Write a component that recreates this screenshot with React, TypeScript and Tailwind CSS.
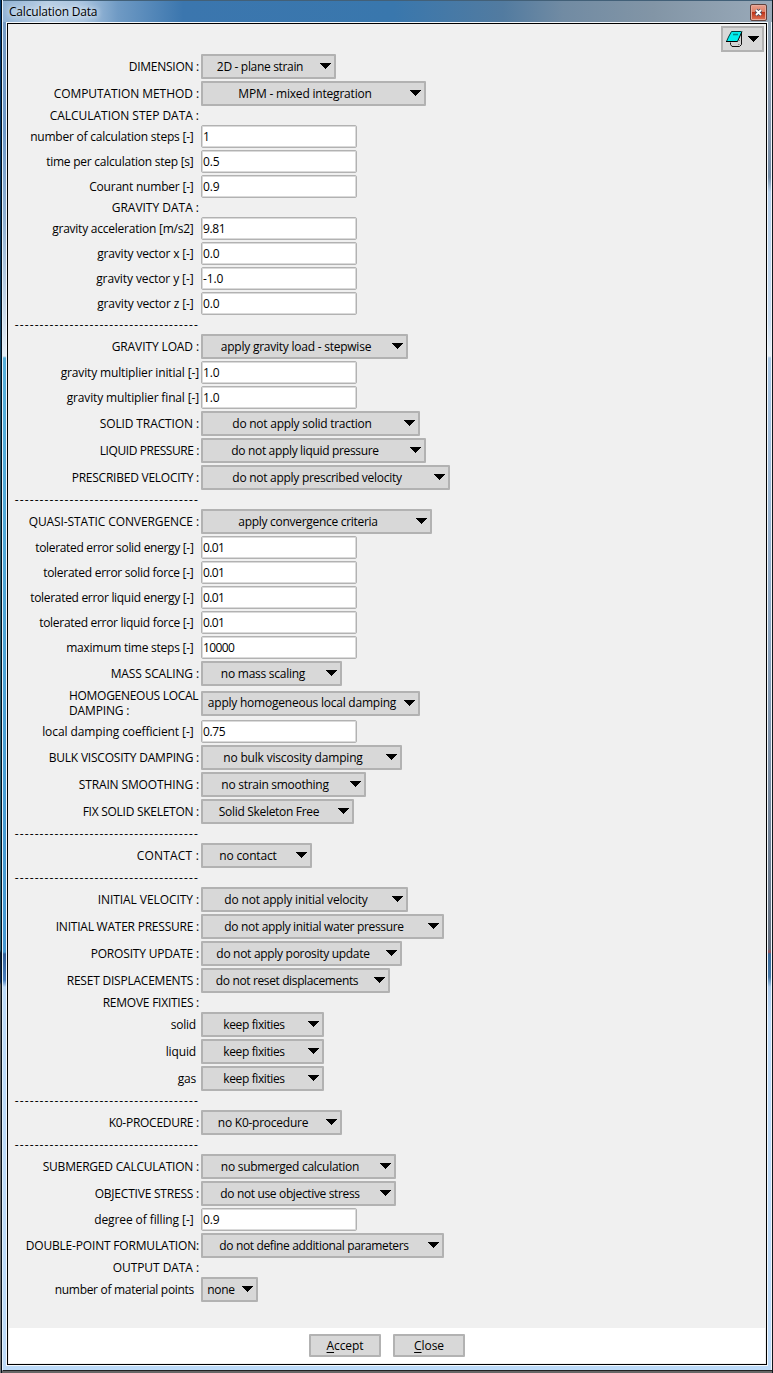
import { useLayoutEffect, useRef } from "react";

type Kind = "select" | "input" | "heading" | "rule" | "tall";

interface Row {
  kind: Kind;
  label: string;
  labelWidth: number;
  inset?: string;
  value?: string;
  valueWidth?: number;
  width?: string;
}

const s = (label: string, labelWidth: number, value: string, valueWidth: number, width: string, inset = ""): Row => ({
  kind: "select", label, labelWidth, value, valueWidth, width, inset,
});
const i = (label: string, labelWidth: number, value: string, valueWidth: number, inset = "pr-[5.5px]"): Row => ({
  kind: "input", label, labelWidth, value, valueWidth, inset,
});
const h = (label: string, labelWidth: number): Row => ({ kind: "heading", label, labelWidth });
const rule: Row = { kind: "rule", label: "-------------------------------------", labelWidth: 184 };

const rows: Row[] = [
  s("DIMENSION :", 70, "2D - plane strain", 86, "w-[135px]"),
  s("COMPUTATION METHOD :", 145, "MPM - mixed integration", 133, "w-[225px]"),
  h("CALCULATION STEP DATA :", 149),
  i("number of calculation steps [-]", 163, "1", 6),
  i("time per calculation step [s]", 147, "0.5", 16),
  i("Courant number [-]", 104, "0.9", 16),
  h("GRAVITY DATA :", 87),
  i("gravity acceleration [m/s2]", 141, "9.81", 22),
  i("gravity vector x [-]", 96, "0.0", 16),
  i("gravity vector y [-]", 97, "-1.0", 20),
  i("gravity vector z [-]", 96, "0.0", 16),
  rule,
  s("GRAVITY LOAD :", 87, "apply gravity load - stepwise", 150, "w-[207px]"),
  i("gravity multiplier initial [-]", 138, "1.0", 16, ""),
  i("gravity multiplier final [-]", 132, "1.0", 16, ""),
  s("SOLID TRACTION :", 99, "do not apply solid traction", 139, "w-[219px]"),
  s("LIQUID PRESSURE :", 99, "do not apply liquid pressure", 147, "w-[225px]"),
  s("PRESCRIBED VELOCITY :", 127, "do not apply prescribed velocity", 169, "w-[249px]"),
  rule,
  s("QUASI-STATIC CONVERGENCE :", 170, "apply convergence criteria", 139, "w-[231px]"),
  i("tolerated error solid energy [-]", 158, "0.01", 21),
  i("tolerated error solid force [-]", 150, "0.01", 21),
  i("tolerated error liquid energy [-]", 163, "0.01", 21),
  i("tolerated error liquid force [-]", 154, "0.01", 21),
  i("maximum time steps [-]", 127, "10000", 31),
  s("MASS SCALING :", 88, "no mass scaling", 84, "w-[141px]"),
  { kind: "tall", label: "HOMOGENEOUS LOCAL", labelWidth: 129, value: "apply homogeneous local damping", valueWidth: 188, width: "w-[219px]" },
  i("local damping coefficient [-]", 151, "0.75", 22),
  s("BULK VISCOSITY DAMPING :", 150, "no bulk viscosity damping", 139, "w-[201px]"),
  s("STRAIN SMOOTHING :", 120, "no strain smoothing", 107, "w-[165px]"),
  s("FIX SOLID SKELETON :", 116, "Solid Skeleton Free", 100, "w-[153px]"),
  rule,
  s("CONTACT :", 62, "no contact", 57, "w-[111px]"),
  rule,
  s("INITIAL VELOCITY :", 101, "do not apply initial velocity", 143, "w-[207px]"),
  s("INITIAL WATER PRESSURE :", 143, "do not apply initial water pressure", 179, "w-[243px]"),
  s("POROSITY UPDATE :", 108, "do not apply porosity update", 153, "w-[201px]"),
  s("RESET DISPLACEMENTS :", 132, "do not reset displacements", 142, "w-[189px]"),
  h("REMOVE FIXITIES :", 96),
  s("solid", 25, "keep fixities", 61, "w-[123px]", "pr-[3px]"),
  s("liquid", 30, "keep fixities", 61, "w-[123px]", "pr-[3px]"),
  s("gas", 18, "keep fixities", 61, "w-[123px]", "pr-[3px]"),
  rule,
  s("K0-PROCEDURE :", 90, "no K0-procedure", 90, "w-[141px]"),
  rule,
  s("SUBMERGED CALCULATION :", 156, "no submerged calculation", 138, "w-[195px]"),
  s("OBJECTIVE STRESS :", 104, "do not use objective stress", 139, "w-[195px]"),
  i("degree of filling [-]", 99, "0.9", 16),
  s("DOUBLE-POINT FORMULATION:", 173, "do not define additional parameters", 189, "w-[243px]"),
  h("OUTPUT DATA :", 86),
  s("number of material points", 139, "none", 27, "w-[57px]", "pr-[5px]"),
];

const rowHeight: Record<Kind, string> = {
  select: "h-[27px]",
  input: "h-[25px]",
  heading: "h-[17px]",
  rule: "h-[17px]",
  tall: "h-8",
};

/* Text whose tracking is adjusted so that its advance equals the given width. */
function Fitted({ text, width }: { text: string; width: number }) {
  const ref = useRef<HTMLSpanElement>(null);
  useLayoutEffect(() => {
    const el = ref.current;
    if (!el) return;
    el.style.letterSpacing = "0px";
    const natural = el.getBoundingClientRect().width;
    const step = (width + 0.3 - natural) / text.length;
    el.style.letterSpacing = `${step}px`;
  }, [text, width]);
  return <span ref={ref} className="inline-block whitespace-pre">{text}</span>;
}

function Arrow() {
  return (
    <svg width="11" height="6" viewBox="0 0 11 6" className="mb-px shrink-0" shapeRendering="crispEdges">
      <path d="M0 0H11V1H10V2H9V3H8V4H7V5H6V6H5V5H4V4H3V3H2V2H1V1H0Z" fill="#000" />
    </svg>
  );
}

function Select({ row }: { row: Row }) {
  return (
    <button className={`flex h-[25px] items-center rounded-[1px] border-2 border-[#b2b2b2] bg-[#d8d8d8] pr-[3px] ${row.width}`}>
      <span className="flex min-w-0 flex-1 justify-center overflow-visible pr-[3px] whitespace-nowrap">
        <Fitted text={row.value ?? ""} width={row.valueWidth ?? 0} />
      </span>
      <Arrow />
    </button>
  );
}

function Field({ row }: { row: Row }) {
  return (
    <div className="flex h-[23px] w-[156px] items-center rounded-[2px] border border-[#b2b2b2] bg-white pl-px shadow-[inset_0_0_0_1px_#dadada]">
      <Fitted text={row.value ?? ""} width={row.valueWidth ?? 0} />
    </div>
  );
}

function FormRow({ row }: { row: Row }) {
  return (
    <div className={`flex items-center ${rowHeight[row.kind]}`}>
      <div className={`flex w-[191px] shrink-0 justify-end whitespace-nowrap ${row.inset ?? ""}`}>
        {row.kind === "tall" ? (
          <div className="flex w-[130px] flex-col items-start leading-[15px]">
            <Fitted text={row.label} width={row.labelWidth} />
            <Fitted text="DAMPING :" width={60} />
          </div>
        ) : (
          <Fitted text={row.label} width={row.labelWidth} />
        )}
      </div>
      <div className="ml-[2px]">
        {row.kind === "input" && <Field row={row} />}
        {(row.kind === "select" || row.kind === "tall") && <Select row={row} />}
      </div>
    </div>
  );
}

function NotebookIcon() {
  return (
    <svg width="18" height="18" viewBox="0 0 18 18">
      <path d="M5 11.5V14.5L6.5 16.5H14L16.5 14.5V4.5L15 4Z" fill="#d3d3d3" />
      <path d="M5.5 12.5V14.5L7 16.5H14.5L16.5 14.5V3" fill="none" stroke="#111" strokeWidth="1" />
      <path d="M6.5 1.5H17L12.5 11.5H1.5L3.5 7Z" fill="#00eeee" />
      <path d="M1.5 11.5L3.5 7L6.5 1.5H16.5" fill="none" stroke="#043c3c" strokeWidth="1" />
      <path d="M17 1.5L12.5 11.5H1" fill="none" stroke="#000" strokeWidth="1" />
      <path d="M8 4.5H13" stroke="#008b8b" strokeWidth="1.6" />
      <path d="M13.5 10.5H15M13 14.5H14.5" stroke="#888" strokeWidth="1" />
    </svg>
  );
}

export default function App() {
  return (
    <div className="flex h-[1373px] w-[773px] overflow-hidden bg-[#666] font-['Open_Sans','Noto_Sans',sans-serif] text-[12px] leading-[16px] text-black">
      <div className="w-[2px] shrink-0 border-r border-[#05101c] bg-[linear-gradient(180deg,#003a75_0px,#073b64_270px,#255c70_500px,#25677d_950px,#061e35_953px,#0b3060_982px,#606060_985px,#777_1373px)]" />
      <div className="flex h-[1371px] w-[770px] shrink-0 flex-col border-b border-l border-b-[#222] border-l-[#e6f1fa] bg-[linear-gradient(180deg,#779dc5_0px,#6c98c8_130px,#8fb1d3_220px,#e4edf5_356px,#55aeda_358px,#4497d0_952px,#315f98_954px,#477dbd_980px,#bcdaf8_987px,#bcdaf8_1371px)]">
        <header className="flex h-[22px] shrink-0 items-center justify-between border-t border-[#426078] bg-[linear-gradient(90deg,#91b3d5_0px,#b9cfe5_45px,#a9c4df_80px,#6f9ac4_115px,#3b76ae_180px,#3977ad_390px,#527ba0_500px,#718ba3_560px,#8295a6_650px,#9aaab9_769px)] pr-[5px] pl-[6px]">
          <span className="[text-shadow:0_0_7px_#fff,0_0_5px_#ddeaff]">
            <Fitted text="Calculation Data" width={88} />
          </span>
          <button className="mt-px flex h-[17px] w-[17px] items-center justify-center rounded-[2px] border border-[#61423d] bg-[linear-gradient(180deg,#eaa08e_0%,#df8067_45%,#bd341a_50%,#df7457_100%)] shadow-[inset_0_0_0_1px_#e7aa9b]">
            <svg width="9" height="9" viewBox="0 0 9 9">
              <path d="M2 2L7 7M7 2L2 7" stroke="#424b61" strokeWidth="3.4" />
              <path d="M2 2L7 7M7 2L2 7" stroke="#fff" strokeWidth="1.8" />
            </svg>
          </button>
        </header>
        <div className="flex min-h-0 flex-1">
          <div className="w-[3px] shrink-0" />
          <main className="flex h-[1344px] w-[762px] flex-col border border-[#f4f8fc] bg-black p-px">
            <div className="flex h-[1304px] shrink-0 flex-col bg-[#f0f0f0]">
              <div className="flex h-[29px] shrink-0 justify-end pt-[2px] pr-[2px]">
                <button className="flex h-[26px] w-[43px] items-center gap-[5px] border-2 border-[#b2b2b2] bg-[#d8d8d8] pl-[2px]">
                  <NotebookIcon />
                  <Arrow />
                </button>
              </div>
              <div className="flex flex-col">
                {rows.map((row, n) => (
                  <FormRow key={n} row={row} />
                ))}
              </div>
            </div>
            <footer className="flex min-h-0 flex-1 items-center justify-center gap-3 border-x border-b border-[#f0f0f0] bg-white">
              <button className="h-[23px] w-[72px] rounded-[1px] border-2 border-[#b2b2b2] bg-[#d8d8d8] leading-[18px] tracking-[-0.1px]">
                <u className="underline-offset-2">A</u>ccept
              </button>
              <button className="h-[23px] w-[72px] rounded-[1px] border-2 border-[#b2b2b2] bg-[#d8d8d8] leading-[18px] tracking-[-0.1px]">
                <u className="underline-offset-2">C</u>lose
              </button>
            </footer>
          </main>
          <div className="w-1 shrink-0 border-r border-[#f0f6fc] bg-[linear-gradient(180deg,#94a6b7_0px,#8295ac_120px,#718ba5_155px,#b4cfea_170px,#c8dcf0_300px,#e8f0f6_334px,#abc9e7_336px,#8fa9c4_600px,#6b7a8c_880px,#65707f_927px,#a0525a_930px,#3b6c9c_932px,#4578a8_955px,#a8c8ea_965px,#bcdaf8_1000px,#bcdaf8_1350px)]" />
        </div>
      </div>
      <div className="w-px shrink-0 bg-[#11171d]" />
    </div>
  );
}
